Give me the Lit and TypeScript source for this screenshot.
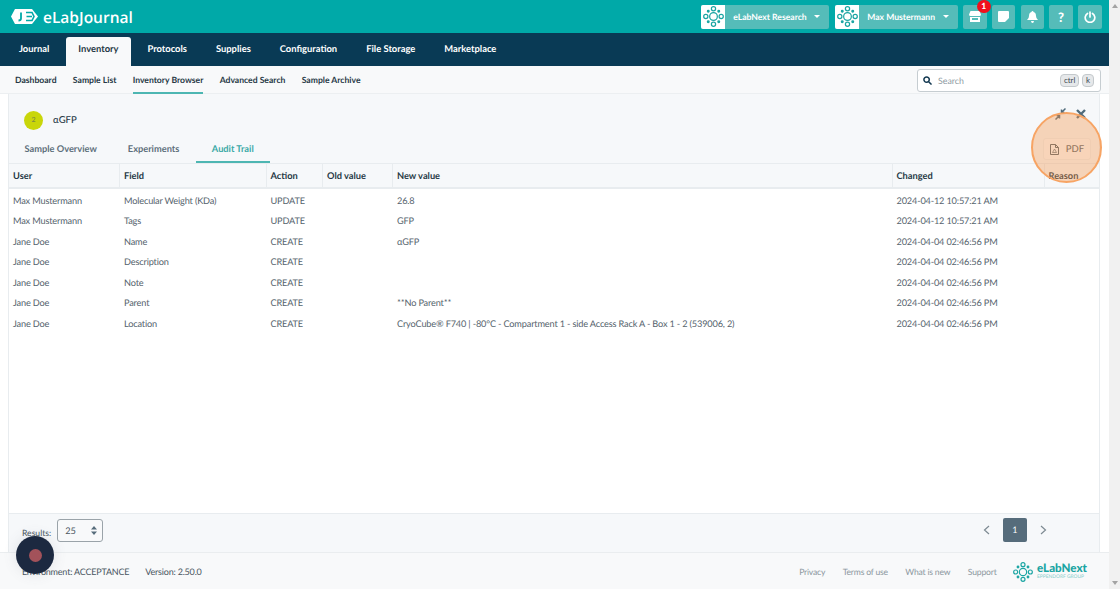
import { LitElement, html, css } from "lit";
import { customElement } from "lit/decorators.js";

const netLogo = (size: number, c = "#1aa5a3") => html`<svg width=${size} height=${size} viewBox="0 0 24 24" fill="none" stroke=${c} stroke-width="1.4">
  <circle cx="12" cy="12" r="4.4" />
  <circle cx="12" cy="3.2" r="2.4" /><circle cx="12" cy="20.800" r="2.4" />
  <circle cx="3.2" cy="12" r="2.4" /><circle cx="20.800" cy="12" r="2.4" />
  <circle cx="6" cy="6" r="1" fill=${c} /><circle cx="18" cy="6" r="1" fill=${c} />
  <circle cx="6" cy="18" r="1" fill=${c} /><circle cx="18" cy="18" r="1" fill=${c} />
</svg>`;

const rows = [
  ["Max Mustermann", "Molecular Weight (KDa)", "UPDATE", "", "26.8", "2024-04-12 10:57:21 AM", ""],
  ["Max Mustermann", "Tags", "UPDATE", "", "GFP", "2024-04-12 10:57:21 AM", ""],
  ["Jane Doe", "Name", "CREATE", "", "αGFP", "2024-04-04 02:46:56 PM", ""],
  ["Jane Doe", "Description", "CREATE", "", "", "2024-04-04 02:46:56 PM", ""],
  ["Jane Doe", "Note", "CREATE", "", "", "2024-04-04 02:46:56 PM", ""],
  ["Jane Doe", "Parent", "CREATE", "", "**No Parent**", "2024-04-04 02:46:56 PM", ""],
  ["Jane Doe", "Location", "CREATE", "", "CryoCube® F740 | -80°C - Compartment 1 - side Access Rack A - Box 1 - 2 (539006, 2)", "2024-04-04 02:46:56 PM", ""],
];
const heads = ["User", "Field", "Action", "Old value", "New value", "Changed", "Reason"];

@customElement("app-root")
export class AppRoot extends LitElement {
  static styles = css`
    :host { display: block; position: relative; width: 1120px; height: 589px; overflow: hidden; font-family: "Lato", "Open Sans", sans-serif; font-size: 9px; color: #49565f; background: #fff; text-rendering: geometricPrecision; }
    * { box-sizing: border-box; }
    .page { width: 1109px; height: 589px; display: flex; flex-direction: column; }
    .top { height: 33px; background: #00a9a8; display: flex; align-items: center; padding: 0 7.5px 0 11px; flex: none; }
    .brand { display: flex; align-items: center; gap: 5px; color: #fff; font-size: 15.5px; font-weight: 600; font-family: "Open Sans", sans-serif; }
    .spacer { flex: 1; }
    .pick { display: flex; align-items: center; height: 24px; width: 128px; background: #55bcb9; border-radius: 2px; color: #fff; font-weight: 700; font-size: 8.6px; margin-right: 6px; }
    .pick.user { width: 123px; margin-right: 5px; }
    .pick .lg { width: 24px; height: 24px; background: #fff; display: flex; align-items: center; justify-content: center; border-radius: 2px 0 0 2px; flex: none; }
    .pick .nm { flex: 1; padding-left: 8px; white-space: nowrap; }
    .caret { width: 0; height: 0; border-left: 3.5px solid transparent; border-right: 3.5px solid transparent; border-top: 3.5px solid #fff; margin: 0 9px 0 4px; }
    .ib { width: 23.5px; height: 24px; background: #55bcb9; border-radius: 2px; margin-left: 5.2px; display: flex; align-items: center; justify-content: center; position: relative; color: #fff; font-weight: 900; font-size: 13px; }
    .ib.first { margin-left: 0; }
    .badge { position: absolute; top: -5px; right: -4px; width: 14px; height: 13px; border-radius: 7px; background: #f0101c; color: #fff; font-size: 8.5px; font-weight: 900; text-align: center; line-height: 13px; }
    .nav { height: 33px; background: #093a55; display: flex; align-items: flex-end; padding-left: 4.5px; flex: none; }
    .nav a { height: 29px; padding: 0 14.5px; color: #fff; font-weight: 700; font-size: 9.4px; line-height: 26px; white-space: nowrap; }
    .nav a.on { background: #f8f9fa; color: #263845; border-radius: 3px 3px 0 0; width: 65px; padding: 0; text-align: center; margin: 0 2px; }
    .sub { height: 28px; background: #f8f9fa; border-bottom: 1px solid #eceff1; display: flex; align-items: stretch; padding-left: 15px; gap: 16.3px; flex: none; position: relative; }
    .sub a { color: #263845; font-weight: 700; font-size: 8.6px; line-height: 28px; white-space: nowrap; }
    .sub a.on { border-bottom: 2px solid #4db6b2; height: 28px; }
    .search { margin-left: auto; margin-right: 8px; margin-top: 2.5px; width: 184px; height: 23px; border: 1px solid #c6cdd1; border-radius: 3px; background: #fff; display: flex; align-items: center; padding: 0 6px 0 5px; color: #8f9ba3; font-size: 8.8px; }
    .search svg { margin-right: 6px; }
    .search span { flex: 1; }
    .search kbd { font-family: "Lato", sans-serif; font-size: 8px; color: #3d4a52; background: #e6e8ea; border: 1px solid #c4c9cc; border-radius: 4px; height: 13px; line-height: 11px; padding: 0 3px; margin-left: 2.5px; flex: none; }
    .main { flex: 1; min-height: 0; display: flex; flex-direction: column; margin: 0 9px 0 8px; border-left: 1px solid #e8ecef; border-right: 1px solid #e8ecef; background: #f6f8fa; }
    .head { height: 69px; flex: none; position: relative; display: flex; flex-direction: column; }
    .title { height: 44px; display: flex; align-items: center; padding: 9px 0 0 15px; gap: 10px; color: #263845; font-size: 9.5px; font-weight: 500; }
    .dot { width: 19px; height: 19px; border-radius: 50%; background: #c9d60a; color: #7b8a45; font-size: 7px; text-align: center; line-height: 19px; }
    .tabs { display: flex; height: 25px; }
    .tabs a { padding: 0 15.5px; font-weight: 700; font-size: 9.25px; color: #5d6f7b; line-height: 21px; height: 25px; white-space: nowrap; }
    .tabs a.on { color: #3aa9a6; border-bottom: 2px solid #4db6b2; margin-left: 1px; padding: 0 16px; }
    .acts { position: absolute; top: 14px; right: 13px; display: flex; gap: 10px; align-items: center; }
    .pdf { position: absolute; top: 44px; right: 8px; width: 48px; height: 22px; background: #fbfbfc; border: 1px solid #eef0f2; border-radius: 3px; display: flex; align-items: center; justify-content: center; gap: 7px; font-size: 9.5px; color: #55636d; font-weight: 500; }
    .grid { display: grid; grid-template-columns: 111px 146.5px 56.5px 70px 499.5px 152px 56px; }
    .gh { height: 26px; border-top: 1px solid #e8ecef; border-bottom: 2px solid #e8ecef; background: #f6f8fa; flex: none; }
    .gh div { padding-left: 4px; height: 23px; font-weight: 700; font-size: 9.25px; color: #263845; line-height: 24.5px; border-right: 1px solid #e8ecef; white-space: nowrap; }
    .gh div:last-child { border-right: 0; }
    .body { flex: 1; background: #fff; border-bottom: 1px solid #e8ecef; padding-top: 1.7px; min-height: 0; }
    .grid.r div { padding-left: 4px; height: 20.5px; line-height: 20.5px; font-size: 9.2px; letter-spacing: -0.17px; color: #55636d; white-space: nowrap; }
    .pager { height: 38px; flex: none; display: flex; align-items: center; padding: 0 52px 6px 13px; }
    .results { font-size: 8.6px; margin-top: 6px; margin-right: 6px; }
    .sel { width: 46px; height: 23px; background: #f8f9fa; border: 1px solid #9aa3a9; border-radius: 3px; display: flex; align-items: center; justify-content: space-between; padding: 0 5px 0 7px; font-size: 9.2px; }
    .pg { width: 24.5px; height: 24.5px; background: #566c7b; border-radius: 2px; color: #fff; font-size: 9px; text-align: center; line-height: 24.5px; margin: 0 13px; }
    .foot { height: 37px; flex: none; background: #f8f9fa; border-top: 1px solid #eaedef; display: flex; align-items: center; padding: 1px 22px 0 22px; font-size: 9px; letter-spacing: -0.2px; color: #49565f; gap: 16px; }
    .foot .links { display: flex; gap: 17.5px; color: #8c989f; font-size: 8.6px; }
    .mark { display: flex; align-items: center; gap: 4.5px; letter-spacing: 0; }
    .mark .t { display: flex; flex-direction: column; line-height: 1; color: #1aa5a3; font-weight: 900; font-size: 11.6px; }
    .mark small { font-size: 4.9px; font-weight: 500; color: #8fd0ce; margin-top: 0; }
    .scroll { position: absolute; top: 0; right: 0; width: 11px; height: 589px; background: #f1f1f1; display: flex; flex-direction: column; justify-content: space-between; align-items: center; padding: 4px 0; }
    .tri-u { width: 0; height: 0; border-left: 3px solid transparent; border-right: 3px solid transparent; border-bottom: 4px solid #a3a3a3; }
    .tri-d { width: 0; height: 0; border-left: 3px solid transparent; border-right: 3px solid transparent; border-top: 4px solid #a3a3a3; }
    .spot { position: absolute; left: 1031px; top: 112px; width: 71px; height: 71px; border-radius: 50%; background: rgba(245, 150, 75, 0.38); border: 2.5px solid #f7a464; }
    .rec { position: absolute; left: 16px; top: 536px; width: 38px; height: 38px; border-radius: 50%; background: #1c2940; display: flex; align-items: center; justify-content: center; box-shadow: 0 0 14px rgba(90, 100, 110, 0.14); }
    .rec i { width: 13px; height: 13px; border-radius: 50%; background: #a3525a; }
    svg { display: block; flex: none; }
  `;

  render() {
    return html`
      <div class="page">
        <div class="top">
          <div class="brand">
            <svg width="27" height="15" viewBox="0 0 27 15">
              <path d="M4 0H21L27 7.500L21 15H4L0 7.500Z" fill="#fff"/>
              <path d="M10 3.500V9.500Q10 11.500 7.500 11.500" fill="none" stroke="#00a9a8" stroke-width="1.800"/>
              <path d="M15 3.500H21L23 7.500L21 11.500H15M15.500 7.500H21" fill="none" stroke="#00a9a8" stroke-width="1.600"/>
            </svg>
            <span>eLabJournal</span>
          </div>
          <div class="spacer"></div>
          <div class="pick"><div class="lg">${netLogo(21)}</div><div class="nm">eLabNext Research</div><i class="caret"></i></div>
          <div class="pick user"><div class="lg">${netLogo(21)}</div><div class="nm">Max Mustermann</div><i class="caret"></i></div>
          <div class="ib first">
            <svg width="12" height="11" viewBox="0 0 12 11" fill="#fff"><path d="M1.500 0H10.500L12 3.500Q12 5 10.500 5H1.500Q0 5 0 3.500ZM1 6H11V11H1ZM3 7V9H9V7Z" fill-rule="evenodd"/></svg>
            <span class="badge">1</span>
          </div>
          <div class="ib"><svg width="11" height="11" viewBox="0 0 11 11" fill="#fff"><path d="M1 0H10Q11 0 11 1V7L7 11H1Q0 11 0 10V1Q0 0 1 0Z"/></svg></div>
          <div class="ib"><svg width="11" height="12" viewBox="0 0 11 12" fill="#fff"><path d="M5.500 0Q6.500 0 6.500 1Q9 1.600 9 5Q9 7.500 11 9H0Q2 7.500 2 5Q2 1.600 4.500 1Q4.500 0 5.500 0ZM4 10H7Q6.800 12 5.500 12Q4.200 12 4 10Z"/></svg></div>
          <div class="ib">?</div>
          <div class="ib"><svg width="12" height="12" viewBox="0 0 12 12" fill="none" stroke="#fff" stroke-width="1.700" stroke-linecap="round"><path d="M3.500 2.500A4.800 4.800 0 1 0 8.500 2.500M6 1V6"/></svg></div>
        </div>
        <div class="nav">
          <a>Journal</a><a class="on">Inventory</a><a>Protocols</a><a>Supplies</a><a>Configuration</a><a>File Storage</a><a>Marketplace</a>
        </div>
        <div class="sub">
          <a>Dashboard</a><a>Sample List</a><a class="on">Inventory Browser</a><a>Advanced Search</a><a>Sample Archive</a>
          <div class="search">
            <svg width="9" height="9" viewBox="0 0 10 10" fill="none" stroke="#153a52" stroke-width="1.700"><circle cx="4" cy="4" r="3"/><path d="M6.300 6.300L9.500 9.500"/></svg>
            <span>Search</span><kbd>ctrl</kbd><kbd>k</kbd>
          </div>
        </div>
        <div class="main">
          <div class="head">
            <div class="title"><div class="dot">2</div><span>αGFP</span></div>
            <div class="tabs"><a>Sample Overview</a><a>Experiments</a><a class="on">Audit Trail</a></div>
            <div class="acts">
              <svg width="11" height="12" viewBox="0 0 11 12" fill="none" stroke="#4f6a7a" stroke-width="1.500"><path d="M0.500 11.500L4 8M10.500 0.500L7 4M1.500 7.500H4.500V10.500M9.500 4.500H6.500V1.500"/></svg>
              <svg width="10" height="10" viewBox="0 0 10 10" fill="none" stroke="#4f6a7a" stroke-width="2.400"><path d="M1 1L9 9M9 1L1 9"/></svg>
            </div>
            <div class="pdf">
              <svg width="9" height="11" viewBox="0 0 9 11" fill="none" stroke="#55636d"><path d="M0.500 0.500H5.500L8.500 3.500V10.500H0.500ZM5.500 0.500V3.500H8.500"/><path d="M2.500 8.500L4.500 5L6.500 8.500Z" stroke-width="0.700"/></svg>
              <span>PDF</span>
            </div>
          </div>
          <div class="grid gh">${heads.map((h) => html`<div>${h}</div>`)}</div>
          <div class="body">
            ${rows.map((r) => html`<div class="grid r">${r.map((c) => html`<div>${c}</div>`)}</div>`)}
          </div>
          <div class="pager">
            <span class="results">Results:</span>
            <div class="sel"><span>25</span>
              <svg width="6" height="9" viewBox="0 0 6 9" fill="#566c7b"><path d="M3 0L6 3.500H0ZM3 9L0 5.500H6Z"/></svg>
            </div>
            <div class="spacer"></div>
            <svg width="7" height="10" viewBox="0 0 7 10" fill="none" stroke="#7d8a92" stroke-width="1.200"><path d="M6 1L1.500 5L6 9"/></svg>
            <div class="pg">1</div>
            <svg width="7" height="10" viewBox="0 0 7 10" fill="none" stroke="#7d8a92" stroke-width="1.200"><path d="M1 1L5.500 5L1 9"/></svg>
          </div>
        </div>
        <div class="foot">
          <span>Environment: ACCEPTANCE</span><span>Version: 2.50.0</span>
          <div class="spacer"></div>
          <div class="links"><span>Privacy</span><span>Terms of use</span><span>What is new</span><span>Support</span></div>
          <div class="mark">${netLogo(20)}<div class="t"><span>eLabNext</span><small>EPPENDORF GROUP</small></div></div>
        </div>
      </div>
      <div class="scroll"><i class="tri-u"></i><i class="tri-d"></i></div>
      <div class="spot"></div>
      <div class="rec"><i></i></div>
    `;
  }
}
